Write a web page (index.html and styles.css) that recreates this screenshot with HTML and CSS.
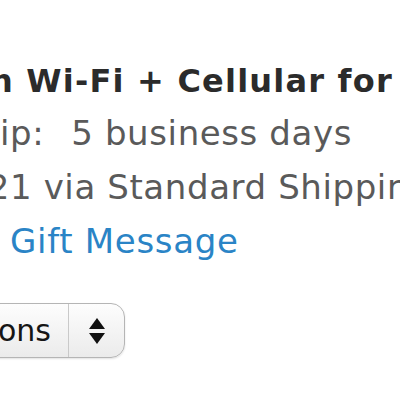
FILE: index.html
```html
<!DOCTYPE html>
<html>
<head>
<meta charset="utf-8">
<link rel="stylesheet" href="styles.css">
</head>
<body>
<div class="page">
  <div class="line title"><span class="clip clip-title">with</span><span class="rest">&nbsp;Wi-Fi + Cellular for AT&amp;T</span></div>
  <div class="line info"><span class="rest">ip:</span><span class="rest gap">5 business days</span></div>
  <div class="line info"><span class="clip clip-date">2</span><span class="rest">1 via Standard Shipping</span></div>
  <div class="line link"><span class="rest">Gift Message</span></div>
  <div class="select">
    <div class="select-label"><span>Options</span></div>
    <div class="select-arrows">
      <svg width="20" height="32" viewBox="0 0 20 32">
        <path d="M10 3 L18 14 L2 14 Z" fill="#111"/>
        <path d="M2 18 L18 18 L10 29 Z" fill="#111"/>
      </svg>
    </div>
  </div>
</div>
</body>
</html>
```
FILE: styles.css
```css
html, body {
  margin: 0;
  padding: 0;
  background: #ffffff;
}
.page {
  width: 400px;
  height: 400px;
  overflow: hidden;
  padding-top: 56px;
  box-sizing: border-box;
  font-family: "DejaVu Sans", "Noto Sans", sans-serif;
}
.line {
  display: flex;
  white-space: nowrap;
  font-size: 34px;
  height: 54px;
  line-height: 54px;
}
.title {
  font-weight: bold;
  font-size: 32px;
  height: 50px;
  line-height: 50px;
  color: #2b2b2b;
  letter-spacing: 1.2px;
}
.info {
  color: #5a5a5a;
  letter-spacing: 0.6px;
}
.gap { margin-left: 27px; }
.link {
  color: #2a84c6;
  padding-left: 10px;
  letter-spacing: 0.7px;
}
.clip {
  display: flex;
  justify-content: flex-end;
  overflow: hidden;
  flex: none;
}
.clip-title { width: 14px; }
.clip-date { width: 10px; }
.rest { flex: none; }
.select {
  margin-top: 35px;
  margin-left: -40px;
  width: 165px;
  height: 55px;
  box-sizing: border-box;
  display: flex;
  border: 1px solid #b5b5b5;
  border-radius: 14px;
  background: linear-gradient(#fdfdfd, #ebebeb);
  box-shadow: 0 1px 2px rgba(0,0,0,0.12);
}
.select-label {
  width: 108px;
  flex: none;
  display: flex;
  justify-content: flex-end;
  align-items: center;
  overflow: hidden;
  padding-right: 17px;
  box-sizing: border-box;
  border-right: 1px solid #c9c9c9;
  font-size: 30px;
  color: #151515;
  white-space: nowrap;
}
.select-arrows {
  flex: 1;
  display: flex;
  align-items: center;
  justify-content: center;
}
.select-arrows svg { display: block; }
```
